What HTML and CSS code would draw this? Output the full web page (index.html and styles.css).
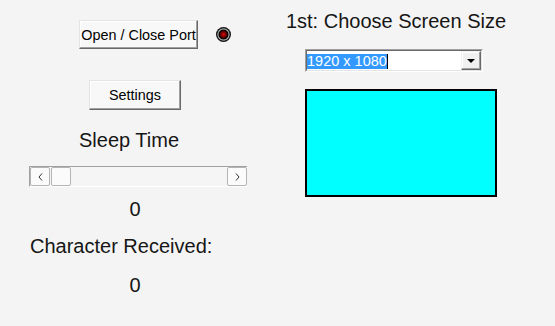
FILE: index.html
```html
<!DOCTYPE html>
<html lang="en">
<head>
    <meta charset="UTF-8">
    <meta name="viewport" content="width=device-width, initial-scale=1.0">
    <title>Screen Size</title>
    <link rel="stylesheet" href="styles.css">
</head>
<body>
    <div class="window">
        <div class="left-col">
            <div class="port-row">
                <button class="btn port-btn" type="button">Open / Close Port</button>
                <div class="led"></div>
            </div>
            <button class="btn settings-btn" type="button">Settings</button>

            <p class="label sleep-label">Sleep Time</p>
            <div class="scrollbar">
                <div class="arrow-btn">
                    <svg width="5" height="8" viewBox="0 0 5 8"><polyline points="4,0.5 1,4 4,7.5" fill="none" stroke="#333" stroke-width="1"/></svg>
                </div>
                <div class="thumb"></div>
                <div class="track"></div>
                <div class="arrow-btn">
                    <svg width="5" height="8" viewBox="0 0 5 8"><polyline points="1,0.5 4,4 1,7.5" fill="none" stroke="#333" stroke-width="1"/></svg>
                </div>
            </div>
            <p class="label value">0</p>

            <p class="label received-label">Character Received:</p>
            <p class="label value">0</p>
        </div>

        <div class="right-col">
            <p class="label title">1st: Choose Screen Size</p>
            <div class="select">
                <div class="select-inner">
                    <div class="select-text"><span class="selected">1920 x 1080</span></div>
                    <div class="drop-btn"><span class="triangle"></span></div>
                </div>
            </div>
            <div class="screen-preview"></div>
        </div>
    </div>
</body>
</html>
```

FILE: styles.css
```css
*{
    margin: 0;
    padding: 0;
    box-sizing: border-box;
}

:root{
    --background: #f4f4f4;
    --text: #161616;
    --btnFace: #f8f8f8;
    --cyan: #00ffff;
}

body{
    background-color: var(--background);
    color: var(--text);
    font-family: "Liberation Sans", Arial, sans-serif;
    width: 555px;
    height: 326px;
    overflow: hidden;
}

.window{
    display: flex;
    gap: 36px;
}

.left-col{
    width: 247px;
    padding-left: 29px;
    padding-top: 20px;
    display: flex;
    flex-direction: column;
}

.label{
    font-size: 20px;
    line-height: 24px;
}

/* buttons */
.btn{
    appearance: none;
    font-family: "Liberation Sans", Arial, sans-serif;
    font-size: 14.4px;
    color: #000;
    background-color: var(--btnFace);
    border: 1px solid;
    border-color: #e4e4e4 #696969 #696969 #e4e4e4;
    box-shadow: inset -1px -1px 0 #a0a0a0, inset 1px 1px 0 #fff;
}

.port-row{
    display: flex;
    align-items: center;
}

.port-btn{
    width: 119px;
    height: 29px;
    margin-left: 50px;
}

.led{
    width: 15px;
    height: 15px;
    margin-left: 18px;
    border-radius: 50%;
    background: radial-gradient(circle at 50% 50%, #e01010 0, #9a0000 1.5px, #6a0000 3px, #1a0000 3.8px, #000 4.5px, #8a8a8a 5.2px, #b0b0b0 5.7px, #303030 6.3px, #000 7.5px);
}

.settings-btn{
    width: 92px;
    height: 30px;
    margin-top: 31px;
    margin-left: 60px;
}

.sleep-label{
    margin-top: 18px;
    text-align: center;
    padding-right: 18px;
}

/* horizontal scale */
.scrollbar{
    margin-top: 14px;
    width: 218px;
    height: 21px;
    display: flex;
    background-color: #f5f5f5;
    border-top: 1px solid #a0a0a0;
    border-left: 1px solid #a0a0a0;
    border-bottom: 1px solid #fff;
}

.arrow-btn, .thumb{
    width: 20px;
    height: 19px;
    border: 1px solid #b4b4b4;
    border-radius: 2px;
    background-color: #fbfbfb;
    display: flex;
    align-items: center;
    justify-content: center;
}

.thumb{
    margin-left: 1px;
}

.track{
    flex: 1;
}

.value{
    margin-top: 10px;
    text-align: center;
    padding-right: 6px;
}

.received-label{
    margin-top: 13px;
    padding-left: 1px;
}

.received-label + .value{
    margin-top: 15px;
}

/* right side */
.right-col{
    width: 226px;
    padding-top: 9px;
    display: flex;
    flex-direction: column;
}

.title{
    text-align: center;
    white-space: nowrap;
}

.select{
    margin-top: 16px;
    margin-left: 22px;
    width: 178px;
    height: 23px;
    border: 1px solid;
    border-color: #a0a0a0 #fff #fff #a0a0a0;
}

.select-inner{
    height: 100%;
    display: flex;
    background-color: #fff;
    border: 1px solid;
    border-color: #696969 #e4e4e4 #e4e4e4 #696969;
}

.select-text{
    flex: 1;
    padding-top: 1px;
}

.selected{
    display: inline-block;
    font-size: 14.5px;
    line-height: 15px;
    height: 15px;
    color: #fff;
    background-color: #3399ff;
    border-right: 1px solid #000;
}

.drop-btn{
    width: 20px;
    display: flex;
    align-items: center;
    justify-content: center;
    background-color: #f0f0f0;
    border: 1px solid;
    border-color: #f0f0f0 #696969 #696969 #f0f0f0;
    box-shadow: inset -1px -1px 0 #a0a0a0, inset 1px 1px 0 #fff;
}

.triangle{
    width: 0;
    height: 0;
    border-left: 4px solid transparent;
    border-right: 4px solid transparent;
    border-top: 4px solid #000;
}

.screen-preview{
    margin-top: 17px;
    margin-left: 22px;
    width: 192px;
    height: 108px;
    background-color: var(--cyan);
    border: 2px solid #000;
}
```
